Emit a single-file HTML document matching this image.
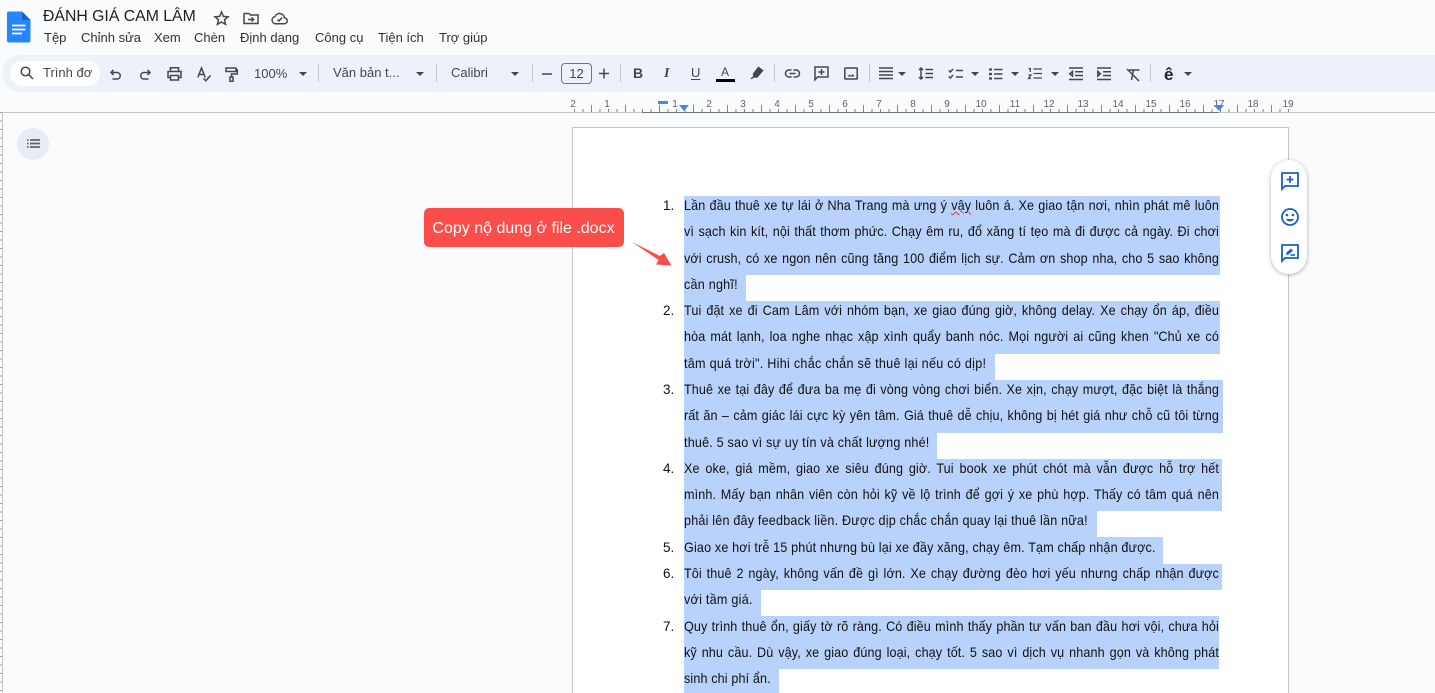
<!DOCTYPE html>
<html lang="vi"><head><meta charset="utf-8"><title>ĐÁNH GIÁ CAM LÂM</title>
<style>
html,body{margin:0;padding:0;width:1435px;height:693px;overflow:hidden}
body{position:relative;background:#f9fbfd;font-family:"Liberation Sans",sans-serif;color:#202124}
.a{position:absolute;white-space:nowrap}
.m{top:30px;font-size:13px;line-height:16px;color:#2f3133}
.t{top:66px;font-size:13px;line-height:16px;color:#444746}
.sep{position:absolute;top:64px;width:1px;height:18px;background:#c7c7c7}
.caret{position:absolute;top:72px;width:0;height:0;border-left:4px solid transparent;border-right:4px solid transparent;border-top:4px solid #444746}
svg.i{position:absolute;fill:none;stroke:#444746;stroke-width:1.5;overflow:visible}
.r{top:99px;font-size:10px;line-height:12px;color:#5f6368;transform:translateX(-50%)}
.bg{position:absolute;left:684px;height:26.6px;background:#b9d2fb}
.l{position:absolute;left:684px;width:594.4px;height:26px;line-height:19px;font-size:14px;letter-spacing:.12px;color:#111;text-align:justify;text-align-last:justify;transform:scaleX(.9);transform-origin:0 0;overflow:visible}
.s{width:auto;text-align:left;text-align-last:left;white-space:nowrap}
.n{position:absolute;left:663px;font-size:13.500px;line-height:19px;color:#111}
</style></head><body>

<!-- docs icon -->
<svg class="a" style="left:7px;top:11px" width="24" height="32" viewBox="0 0 24 32"><path d="M2 0.5H15L23.500 9V29.500a2 2 0 0 1-2 2H2a2 2 0 0 1-2-2V2.500a2 2 0 0 1 2-2z" fill="#2684fc"/><path d="M15 .5L23.500 9H17a2 2 0 0 1-2-2z" fill="#1a5fd0"/><path d="M5 14.500H18.500M5 18.500H18.500M5 22.500H15" stroke="#fff" stroke-width="1.700"/></svg>
<div class="a" style="left:43px;top:7px;font-size:15.800px;line-height:20px;color:#1f1f1f">ĐÁNH GIÁ CAM LÂM</div>
<svg class="i" style="left:214px;top:11px" width="15" height="15" viewBox="0 0 15 15"><path d="M7.500 1L9.400 5.400 14 5.800 10.500 8.800 11.600 13.400 7.500 11 3.400 13.400 4.500 8.800 1 5.800 5.600 5.400z"/></svg>
<svg class="i" style="left:243px;top:12px" width="16" height="13" viewBox="0 0 16 13"><path d="M1 2V11.500H15V3H7.500L6 1.500H1.500z"/><path d="M5 7.500H10.500M8.500 5.500L10.700 7.500 8.500 9.500"/></svg>
<svg class="i" style="left:271px;top:12px" width="17" height="13" viewBox="0 0 17 13"><path d="M4.500 11.800H13a3 3 0 0 0 .5-6A5 5 0 0 0 4 4.500a3.700 3.700 0 0 0 .5 7.300z"/><path d="M6.500 7.500L8 9 11 5.500"/></svg>

<div class="a m" style="left:44px">Tệp</div>
<div class="a m" style="left:81px">Chỉnh sửa</div>
<div class="a m" style="left:154px">Xem</div>
<div class="a m" style="left:194px">Chèn</div>
<div class="a m" style="left:240px">Định dạng</div>
<div class="a m" style="left:315px">Công cụ</div>
<div class="a m" style="left:378px">Tiện ích</div>
<div class="a m" style="left:439px">Trợ giúp</div>

<!-- toolbar -->
<div class="a" style="left:2px;top:55px;width:1433px;height:37px;background:#edf2fa;border-radius:18px 0 0 18px"></div>
<div class="a" style="left:10px;top:61px;width:90px;height:25px;background:#fff;border-radius:13px"></div>
<svg class="i" style="left:20px;top:66px" width="14" height="14" viewBox="0 0 14 14"><circle cx="5.500" cy="5.500" r="4.300"/><path d="M8.700 8.700L13 13"/></svg>
<div class="a t" style="left:43px;width:50px;overflow:hidden;top:65px">Trình đơn</div>
<svg class="i" style="left:110px;top:69px" width="12" height="11" viewBox="0 0 12 11"><path d="M3.500 1L1 3.500 3.500 6M1 3.500H7.500a3.300 3.300 0 0 1 0 6.500H2.500"/></svg>
<svg class="i" style="left:139px;top:69px" width="12" height="11" viewBox="0 0 12 11"><path d="M8.500 1L11 3.500 8.500 6M11 3.500H4.500a3.300 3.300 0 0 0 0 6.500H9.500"/></svg>
<svg class="i" style="left:167px;top:67px" width="15" height="14" viewBox="0 0 15 14"><path d="M3.500 4V.8H11.500V4M3.500 10.500H1V4.500H14V10.500H11.500M3.500 8.500H11.500V13H3.500z"/></svg>
<svg class="i" style="left:197px;top:67px" width="14" height="15" viewBox="0 0 14 15"><path d="M.8 10.500L4.500 1 8.200 10.500M2.200 7.500H6.800M6.500 11.500L8.800 13.800 13.500 8.500"/></svg>
<svg class="i" style="left:225px;top:67px" width="13" height="15" viewBox="0 0 13 15"><path d="M1 1H11V4.500H1zM11 2.800H12.300V7H6.500V10M5 10H8V14.200H5z"/></svg>
<div class="a t" style="left:254px">100%</div><div class="caret" style="left:299px"></div>
<div class="sep" style="left:318px"></div>
<div class="a t" style="left:333px;top:65px">Văn bản t...</div><div class="caret" style="left:416px"></div>
<div class="sep" style="left:436px"></div>
<div class="a t" style="left:451px;top:65px">Calibri</div><div class="caret" style="left:511px"></div>
<div class="sep" style="left:532px"></div>
<svg class="i" style="left:542px;top:73px" width="11" height="2" viewBox="0 0 11 2"><path d="M0 1H10"/></svg>
<div class="a" style="left:561px;top:63px;width:29px;height:19px;border:1px solid #747775;border-radius:4px;text-align:center;font-size:13px;line-height:19px;color:#444746">12</div>
<svg class="i" style="left:599px;top:68px" width="11" height="11" viewBox="0 0 11 11"><path d="M0 5.500H10M5 .5V10.500"/></svg>
<div class="sep" style="left:620px"></div>
<div class="a" style="left:633px;top:65px;font-size:14px;line-height:17px;font-weight:700;color:#444746">B</div>
<div class="a" style="left:664px;top:65px;font-size:14px;line-height:17px;font-style:italic;font-family:'Liberation Serif',serif;font-weight:700;color:#444746">I</div>
<div class="a" style="left:691px;top:65px;font-size:13px;line-height:15px;color:#444746;text-decoration:underline;text-underline-offset:2px">U</div>
<div class="a" style="left:721px;top:66px;font-size:12px;line-height:13px;color:#444746">A</div>
<div class="a" style="left:716px;top:79px;width:19px;height:3px;background:#000"></div>
<svg class="i" style="left:750px;top:66px" width="14" height="14" viewBox="0 0 14 14"><path d="M8.500 1.500L12.500 4.500 7 11H4L3.500 8z" fill="#444746"/><path d="M1 12.800L3.500 11"/></svg>
<div class="sep" style="left:774px"></div>
<svg class="i" style="left:785px;top:69px" width="15" height="9" viewBox="0 0 15 9"><path d="M6.500 1H4a3.300 3.300 0 0 0 0 7H6.500M8.500 1H11a3.300 3.300 0 0 1 0 7H8.500M4.500 4.500H10.500"/></svg>
<svg class="i" style="left:814px;top:66px" width="15" height="15" viewBox="0 0 15 15"><path d="M1 1H14V11H3.500L1 13.800zM7.500 3V9M4.500 6H10.500"/></svg>
<svg class="i" style="left:844px;top:67px" width="14" height="13" viewBox="0 0 14 13"><path d="M1.500 1H12.500a.7.7 0 0 1 .7.7V11.300a.7.7 0 0 1-.7.7H1.500a.7.700 0 0 1-.7-.7V1.700a.7.7 0 0 1 .7-.7z"/><path d="M3.500 9.500L5.500 7.500 7 8.800 8.700 7 10.500 9.500z" fill="#444746" stroke="none"/></svg>
<div class="sep" style="left:869px"></div>
<svg class="i" style="left:879px;top:67px" width="15" height="14" viewBox="0 0 15 14"><path d="M0 1H14M0 4.500H14M0 8H14M0 11.500H14" stroke-width="1.400"/></svg><div class="caret" style="left:898px"></div>
<svg class="i" style="left:918px;top:67px" width="15" height="13" viewBox="0 0 15 13"><path d="M3 1V12M1 3L3 1 5 3M1 10L3 12 5 10M7.500 2.500H15M7.500 6.500H15M7.500 10.500H15"/></svg>
<svg class="i" style="left:948px;top:68px" width="16" height="12" viewBox="0 0 16 12"><path d="M.8 2.500L2.300 4 5 1M.8 8.500L2.300 10 5 7M8 2.500H15M8 9H15"/></svg><div class="caret" style="left:971px"></div>
<svg class="i" style="left:989px;top:68px" width="14" height="12" viewBox="0 0 14 12"><path d="M0 1.500H3M0 6H3M0 10.500H3" stroke-width="2.200"/><path d="M5 1.500H13.500M5 6H13.500M5 10.500H13.500"/></svg><div class="caret" style="left:1011px"></div>
<svg class="i" style="left:1028px;top:67px" width="15" height="14" viewBox="0 0 15 14"><path d="M.5 1.500H2.300V5M.5 8H3L.5 11.500H3M5.500 2H14M5.500 6.500H14M5.500 11H14" stroke-width="1.300"/></svg><div class="caret" style="left:1051px"></div>
<svg class="i" style="left:1069px;top:67px" width="14" height="14" viewBox="0 0 14 14"><path d="M0 1H14M6 4.800H14M6 8.500H14M0 12.500H14M3.500 4.500L.8 6.800 3.500 9z"/></svg>
<svg class="i" style="left:1097px;top:67px" width="14" height="14" viewBox="0 0 14 14"><path d="M0 1H14M6 4.800H14M6 8.500H14M0 12.500H14M.8 4.500L3.500 6.800 .8 9z"/></svg>
<svg class="i" style="left:1126px;top:68px" width="14" height="14" viewBox="0 0 14 14"><path d="M1 1L13 13M3 2H13.500M7.500 2L5.500 12"/></svg>
<div class="sep" style="left:1150px"></div>
<div class="a" style="left:1164px;top:65px;font-size:17px;line-height:20px;font-weight:700;color:#222">ê</div>
<div class="caret" style="left:1184px"></div>

<!-- ruler -->
<svg class="a" style="left:0;top:92px" width="1435" height="22" viewBox="0 0 1435 22">
<defs><pattern id="tk" x="574" y="0" width="34" height="22" patternUnits="userSpaceOnUse">
<path d="M.5 17V20M9 17V20M17.500 13V20M26 17V20" stroke="#80868b" stroke-width="1" fill="none"/></pattern></defs>
<rect x="574" y="0" width="716" height="22" fill="url(#tk)"/>
<path d="M0 20.500H1435" stroke="#c7c7c7"/>
<path d="M642 20.500H1219" stroke="#70757a"/>
</svg>
<div class="a r" style="left:573px">2</div><div class="a r" style="left:607px">1</div><div class="a r" style="left:675px">1</div><div class="a r" style="left:709px">2</div><div class="a r" style="left:743px">3</div><div class="a r" style="left:777px">4</div><div class="a r" style="left:811px">5</div><div class="a r" style="left:845px">6</div><div class="a r" style="left:879px">7</div><div class="a r" style="left:913px">8</div><div class="a r" style="left:947px">9</div><div class="a r" style="left:981px">10</div><div class="a r" style="left:1015px">11</div><div class="a r" style="left:1049px">12</div><div class="a r" style="left:1083px">13</div><div class="a r" style="left:1118px">14</div><div class="a r" style="left:1151px">15</div><div class="a r" style="left:1185px">16</div><div class="a r" style="left:1219px">17</div><div class="a r" style="left:1253px">18</div><div class="a r" style="left:1288px">19</div>
<div class="a" style="left:658px;top:101px;width:10px;height:3px;background:#4285f4"></div>
<div class="a" style="left:679px;top:105px;width:0;height:0;border-left:5px solid transparent;border-right:5px solid transparent;border-top:6px solid #4285f4"></div>
<div class="a" style="left:1214px;top:105px;width:0;height:0;border-left:5px solid transparent;border-right:5px solid transparent;border-top:6px solid #4285f4"></div>

<!-- workspace borders -->
<div class="a" style="left:2px;top:112px;width:1px;height:581px;background:#c7c7c7"></div>
<svg class="a" style="left:0;top:112px" width="2" height="581"><defs><pattern id="vt" width="2" height="8.500" patternUnits="userSpaceOnUse"><rect y="0" width="2" height="1" fill="#9aa0a6"/></pattern></defs><rect width="2" height="581" fill="url(#vt)"/></svg>

<!-- outline button -->
<div class="a" style="left:17px;top:128px;width:32px;height:32px;border-radius:50%;background:#e8ecf4"></div>
<svg class="a" style="left:26px;top:139px" width="15" height="10" viewBox="0 0 15 10"><path d="M4 1H14M4 4.500H14M4 8H14" stroke="#5f6368" stroke-width="1.800"/><path d="M1 1H2.500M1 4.500H2.500M1 8H2.500" stroke="#5f6368" stroke-width="1.800"/></svg>

<!-- page -->
<div class="a" style="left:572px;top:127px;width:715px;height:566px;background:#fff;border:1px solid #c7c7c7;border-bottom:0"></div>

<!-- highlights -->
<div class="bg" style="top:196px;width:536px"></div>
<div class="bg" style="top:222.250px;width:536px"></div>
<div class="bg" style="top:248.500px;width:536px"></div>
<div class="bg" style="top:274.750px;width:62px"></div>
<div class="bg" style="top:301px;width:536px"></div>
<div class="bg" style="top:327.250px;width:536px"></div>
<div class="bg" style="top:353.500px;width:311px"></div>
<div class="bg" style="top:379.750px;width:539px"></div>
<div class="bg" style="top:406px;width:539px"></div>
<div class="bg" style="top:432.250px;width:253px"></div>
<div class="bg" style="top:458.500px;width:538px"></div>
<div class="bg" style="top:484.750px;width:538px"></div>
<div class="bg" style="top:511px;width:413px"></div>
<div class="bg" style="top:537.250px;width:479px"></div>
<div class="bg" style="top:563.500px;width:538px"></div>
<div class="bg" style="top:589.750px;width:77px"></div>
<div class="bg" style="top:616px;width:535px"></div>
<div class="bg" style="top:642.250px;width:535px"></div>
<div class="bg" style="top:668.500px;width:95px;height:24.500px"></div>

<!-- numbers -->
<div class="n" style="top:196px">1.</div>
<div class="n" style="top:301px">2.</div>
<div class="n" style="top:380px">3.</div>
<div class="n" style="top:459px">4.</div>
<div class="n" style="top:538px">5.</div>
<div class="n" style="top:564px">6.</div>
<div class="n" style="top:617px">7.</div>

<!-- text lines -->
<div class="l" style="top:196px">Lần đầu thuê xe tự lái ở Nha Trang mà ưng ý <span style="text-decoration:underline wavy #d93025 1px">vậy</span> luôn á. Xe giao tận nơi, nhìn phát mê luôn</div>
<div class="l" style="top:222px">vì sạch kin kít, nội thất thơm phức. Chạy êm ru, đổ xăng tí tẹo mà đi được cả ngày. Đi chơi</div>
<div class="l" style="top:249px">với crush, có xe ngon nên cũng tăng 100 điểm lịch sự. Cảm ơn shop nha, cho 5 sao không</div>
<div class="l s" style="top:275px;letter-spacing:.25px">cần nghĩ!</div>
<div class="l" style="top:301px">Tui đặt xe đi Cam Lâm với nhóm bạn, xe giao đúng giờ, không delay. Xe chạy ổn áp, điều</div>
<div class="l" style="top:327px">hòa mát lạnh, loa nghe nhạc xập xình quẩy banh nóc. Mọi người ai cũng khen "Chủ xe có</div>
<div class="l s" style="top:354px;letter-spacing:.3px">tâm quá trời". Hihi chắc chắn sẽ thuê lại nếu có dịp!</div>
<div class="l" style="top:380px">Thuê xe tại đây để đưa ba mẹ đi vòng vòng chơi biển. Xe xịn, chạy mượt, đặc biệt là thắng</div>
<div class="l" style="top:406px">rất ăn – cảm giác lái cực kỳ yên tâm. Giá thuê dễ chịu, không bị hét giá như chỗ cũ tôi từng</div>
<div class="l s" style="top:433px;letter-spacing:.21px">thuê. 5 sao vì sự uy tín và chất lượng nhé!</div>
<div class="l" style="top:459px">Xe oke, giá mềm, giao xe siêu đúng giờ. Tui book xe phút chót mà vẫn được hỗ trợ hết</div>
<div class="l" style="top:485px">mình. Mấy bạn nhân viên còn hỏi kỹ về lộ trình để gợi ý xe phù hợp. Thấy có tâm quá nên</div>
<div class="l s" style="top:511px;letter-spacing:.21px">phải lên đây feedback liền. Được dịp chắc chắn quay lại thuê lần nữa!</div>
<div class="l s" style="top:538px;letter-spacing:.17px">Giao xe hơi trễ 15 phút nhưng bù lại xe đầy xăng, chạy êm. Tạm chấp nhận được.</div>
<div class="l" style="top:564px">Tôi thuê 2 ngày, không vấn đề gì lớn. Xe chạy đường đèo hơi yếu nhưng chấp nhận được</div>
<div class="l s" style="top:590px;letter-spacing:.28px">với tầm giá.</div>
<div class="l" style="top:617px">Quy trình thuê ổn, giấy tờ rõ ràng. Có điều mình thấy phần tư vấn ban đầu hơi vội, chưa hỏi</div>
<div class="l" style="top:643px">kỹ nhu cầu. Dù vậy, xe giao đúng loại, chạy tốt. 5 sao vì dịch vụ nhanh gọn và không phát</div>
<div class="l s" style="top:669px;letter-spacing:.14px">sinh chi phí ẩn.</div>

<!-- callout -->
<div class="a" style="left:424px;top:208px;width:200px;height:39px;border-radius:5px;background:#fb4d4a;color:#fff;font-size:16px;line-height:41px;text-align:center;text-indent:-1px">Copy nộ dung ở file .docx</div>
<svg class="a" style="left:630px;top:240px" width="42" height="28" viewBox="0 0 42 28"><path d="M2 2L30 16 34 13 41.500 25.500 26 24.500 28.500 20z" fill="#fb4d4a"/></svg>

<!-- side pill -->
<div class="a" style="left:1271px;top:160px;width:36px;height:114px;border-radius:18px;background:#fff;box-shadow:0 1px 4px rgba(60,64,67,.4)"></div>
<svg class="a" style="left:1280px;top:171px" width="20" height="20" viewBox="0 0 20 20"><path d="M2 2H18V15H5L2 18z" fill="none" stroke="#1a5fd0" stroke-width="1.800"/><path d="M10 5V12M6.500 8.500H13.500" stroke="#1a5fd0" stroke-width="1.800"/></svg>
<svg class="a" style="left:1280px;top:207px" width="20" height="20" viewBox="0 0 20 20"><circle cx="10" cy="10" r="8" fill="none" stroke="#1a5fd0" stroke-width="1.800"/><circle cx="7" cy="8" r="1.300" fill="#1a5fd0"/><circle cx="13" cy="8" r="1.300" fill="#1a5fd0"/><path d="M6 12a4.500 4.500 0 0 0 8 0z" fill="#1a5fd0"/></svg>
<svg class="a" style="left:1280px;top:243px" width="20" height="20" viewBox="0 0 20 20"><path d="M2 2H18V15H5L2 18z" fill="none" stroke="#1a5fd0" stroke-width="1.800"/><path d="M6 12L6.500 9.500 11 5.500 13 7.500 8.500 11.500z" fill="#1a5fd0"/><path d="M10.500 12H15" stroke="#1a5fd0" stroke-width="1.600"/></svg>
</body></html>
